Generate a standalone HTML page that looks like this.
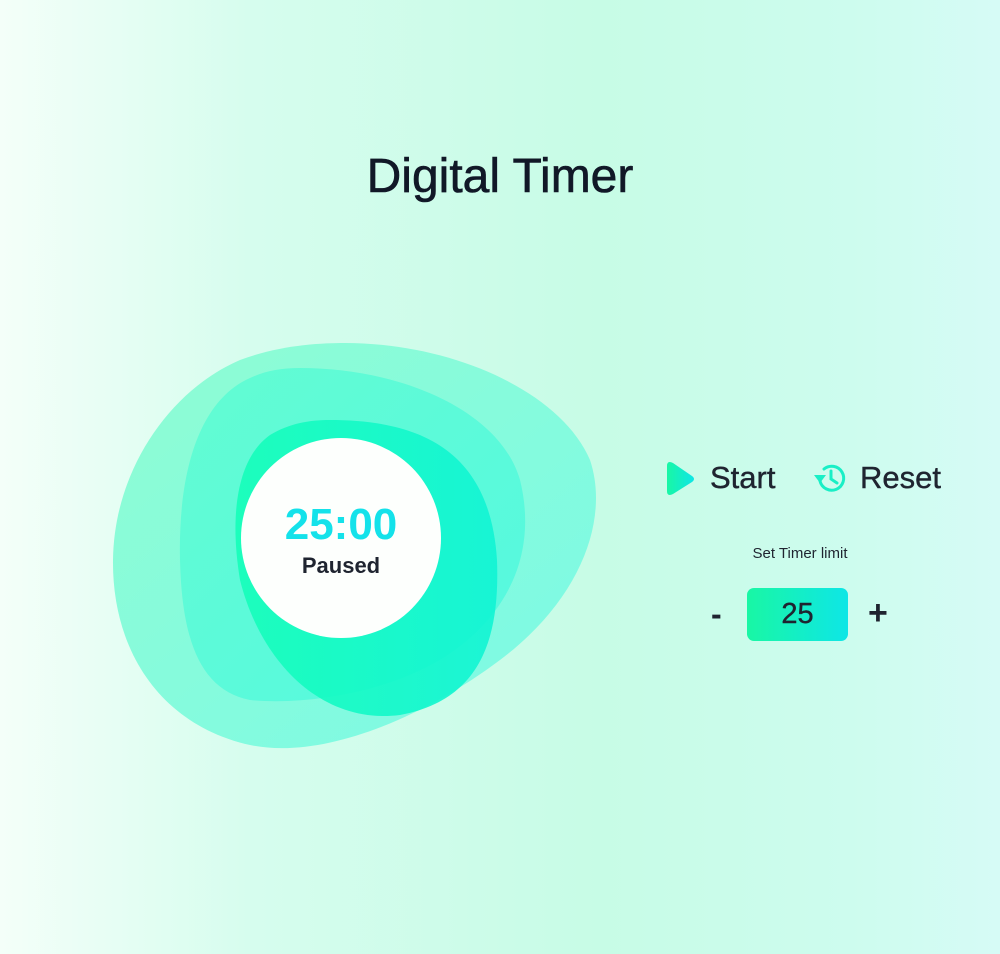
<!DOCTYPE html>
<html><head><meta charset="utf-8"><style>
html,body{margin:0;padding:0;}
body{width:1000px;height:954px;overflow:hidden;position:relative;font-family:"Liberation Sans",sans-serif;
background:linear-gradient(90deg,#f4fff9 0%,#d6fdee 25%,#c7fce6 60%,#cdfcee 85%,#d6fbf6 100%);}
h1{position:absolute;top:149px;left:0;width:1000px;text-align:center;margin:0;font-size:48px;font-weight:500;color:#111827;-webkit-text-stroke:0.6px #111827;}
.t{position:absolute;font-weight:500;color:#1f2430;}
</style></head><body>
<h1>Digital Timer</h1>
<svg width="1000" height="954" style="position:absolute;left:0;top:0">
<defs>
<linearGradient id="g1" x1="0" y1="0" x2="1" y2="1"><stop offset="0" stop-color="#8ffcd3"/><stop offset="1" stop-color="#7cfae6"/></linearGradient>
<linearGradient id="g2" x1="0" y1="0" x2="1" y2="1"><stop offset="0" stop-color="#5efcd2"/><stop offset="1" stop-color="#50f8e0"/></linearGradient>
<linearGradient id="g3" x1="0" y1="0" x2="1" y2="0"><stop offset="0" stop-color="#15feb9"/><stop offset="1" stop-color="#10f4d4"/></linearGradient>
<linearGradient id="g4" x1="0" y1="0" x2="1" y2="0"><stop offset="0" stop-color="#19f7a4"/><stop offset="1" stop-color="#0ee6e6"/></linearGradient>
</defs>
<path fill="url(#g1)" d="M345,343 C450,343 560,390 590,460 C610,520 580,600 500,660 C420,720 320,760 250,745 C160,725 112,650 113,560 C114,470 170,390 240,360 C280,345 320,343 345,343 Z"/>
<path fill="url(#g2)" opacity="0.9" d="M300,368 C400,368 500,410 520,480 C535,540 520,610 440,660 C380,695 300,705 250,700 C200,690 182,640 180,560 C178,470 200,400 250,378 C265,371 280,368 300,368 Z"/>
<path fill="url(#g3)" opacity="0.9" d="M330,420 C420,420 490,450 497,560 C500,640 480,700 400,715 C320,725 260,660 240,580 C230,520 235,460 270,435 C290,423 310,420 330,420 Z"/>
<circle cx="341" cy="538" r="100" fill="#fdfffd"/>
<path fill="url(#g4)" d="M667,466 Q667,460 673,463 L692,476 Q696,479 692,482 L673,494 Q667,497 667,491 Z"/>
<g fill="none" stroke="#19efc6" stroke-width="3" stroke-linecap="round">
<path d="M820,481 A12,12 0 1 0 824,469"/>
<path d="M831,471 L831,479 L837,483"/>
</g>
<path fill="#19efc6" d="M814,475 L826,475 L820,483 Z"/>
<rect x="747" y="588" width="101" height="53" rx="7" fill="url(#g4)"/>
</svg>
<div class="t" style="left:241px;top:500px;width:200px;text-align:center;font-size:44px;font-weight:700;color:#14e2ea">25:00</div>
<div class="t" style="left:241px;top:553px;width:200px;text-align:center;font-size:22px;font-weight:700;color:#1f2430">Paused</div>
<div class="t" style="left:710px;top:460px;font-size:31px;-webkit-text-stroke:0.4px #1f2430">Start</div>
<div class="t" style="left:860px;top:460px;font-size:31px;-webkit-text-stroke:0.4px #1f2430">Reset</div>
<div class="t" style="left:700px;top:545px;width:200px;text-align:center;font-size:15px">Set Timer limit</div>
<div class="t" style="left:711px;top:596px;font-size:32px;font-weight:700">-</div>
<div class="t" style="left:747px;top:598px;width:101px;text-align:center;font-size:29px;-webkit-text-stroke:0.4px #1f2430">25</div>
<div class="t" style="left:868px;top:594px;font-size:34px;font-weight:700">+</div>
</body></html>
